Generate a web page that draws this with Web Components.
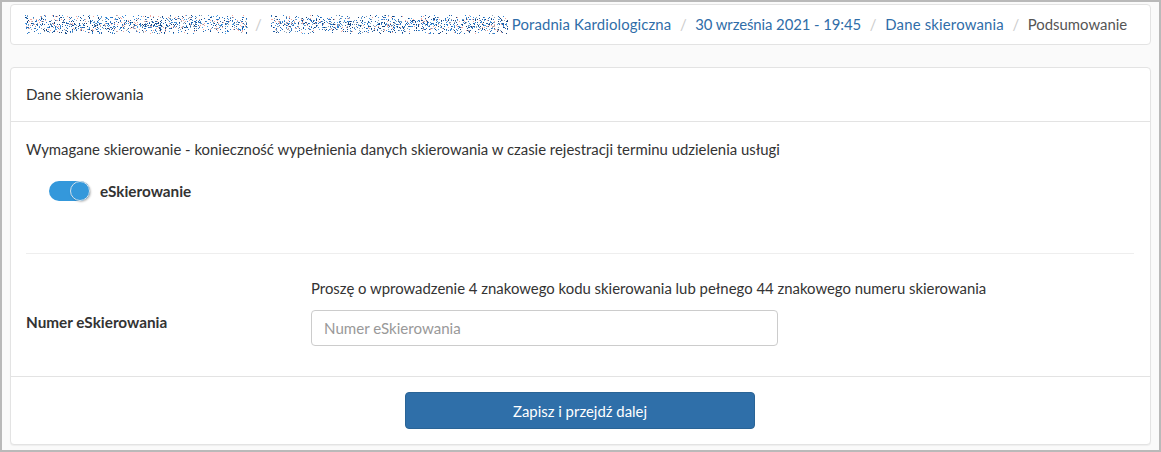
<!DOCTYPE html>
<html lang="pl">
<head>
<meta charset="utf-8">
<title>Dane skierowania</title>
<style>
  html, body { margin: 0; height: 100%; }
  body { font: 14.9px/20px Lato, "Liberation Sans", sans-serif; color: #333; background: #fafafa; }
</style>
</head>
<body>
<app-frame>
  <bread-crumbs>
    <crumb-item noise="223"></crumb-item>
    <crumb-item noise="237"></crumb-item>
    <crumb-item nosep style="letter-spacing: .13px">Poradnia Kardiologiczna</crumb-item>
    <crumb-item style="letter-spacing: -.08px">30 września 2021 - 19:45</crumb-item>
    <crumb-item style="letter-spacing: .18px">Dane skierowania</crumb-item>
    <crumb-item current>Podsumowanie</crumb-item>
  </bread-crumbs>
  <form-card>
    <span slot="title" style="font-size: 15.15px">Dane skierowania</span>
    <p-note>Wymagane skierowanie - konieczność wypełnienia danych skierowania w czasie rejestracji terminu udzielenia usługi</p-note>
    <toggle-switch checked>eSkierowanie</toggle-switch>
    <form-row label="Numer eSkierowania">
      <p-note>Proszę o wprowadzenie 4 znakowego kodu skierowania lub pełnego 44 znakowego numeru skierowania</p-note>
      <text-field placeholder="Numer eSkierowania"></text-field>
    </form-row>
    <primary-button slot="footer">Zapisz i przejdź dalej</primary-button>
  </form-card>
</app-frame>

<script>
/**
 * Small helper: attaches an open shadow root with the given markup.
 */
const shadowOf = (el, html) => {
  el.attachShadow({ mode: "open" });
  el.shadowRoot.innerHTML = html;
  return el.shadowRoot;
};

class AppFrame extends HTMLElement {
  connectedCallback() {
    shadowOf(this, `
      <style>
        :host {
          display: flex; flex-direction: column; box-sizing: border-box;
          height: 452px; padding: 2px 8px 5px 8px;
          border: 2px solid #b9b9b9;
          background: #fafafa;
        }
      </style>
      <slot></slot>
    `);
  }
}

class BreadCrumbs extends HTMLElement {
  connectedCallback() {
    shadowOf(this, `
      <style>
        :host {
          display: flex; align-items: center; box-sizing: border-box;
          height: 41px; padding: 0 14px; margin-bottom: 22px;
          background: #fff; border: 1px solid #e3e3e3; border-radius: 4px;
          white-space: nowrap;
        }
      </style>
      <slot></slot>
    `);
  }
}

// Redacted crumbs are a field of random pixels, seeded so each run is the same
const noiseSvg = (width, seed) => {
  let s = seed;
  const next = () => (s = (s * 16807) % 2147483647) / 2147483647;
  const colors = ["#2a66ad", "#1f5fa8", "#2f7fd0", "#4a9be0", "#f2a9a0", "#8fa3b5", "#163f78"];
  let rects = "";
  for (let x = 0; x < width; x++) {
    for (let y = 0; y < 19; y++) {
      const band = 1 - Math.abs(y - 9) / 12;
      if (next() < 0.36 * band) {
        const c = colors[Math.floor(next() * colors.length)];
        rects += `<rect x="${x}" y="${y}" width="1" height="1" fill="${c}"/>`;
      }
    }
  }
  return `<svg width="${width}" height="19" viewBox="0 0 ${width} 19" shape-rendering="crispEdges" aria-hidden="true">${rects}</svg>`;
};

let noiseSeed = 4711;

class CrumbItem extends HTMLElement {
  connectedCallback() {
    const noise = this.getAttribute("noise");
    const first = !this.previousElementSibling;
    const body = noise ? noiseSvg(Number(noise), (noiseSeed += 1237)) : "<slot></slot>";
    let sep = `<span class="sep${noise ? " tight" : ""}">/</span>`;
    if (first) sep = "";
    if (this.hasAttribute("nosep")) sep = '<span class="gap"></span>';
    shadowOf(this, `
      <style>
        :host { display: inline-flex; align-items: center; color: #2f6da8; }
        :host([current]) { color: #555; }
        .sep { color: #ccc; padding: 0 8.6px; }
        .sep.tight { padding: 0 9px 0 7px; }
        .gap { width: 4px; }
        svg { display: block; }
      </style>
      ${sep}${body}
    `);
  }
}

class FormCard extends HTMLElement {
  connectedCallback() {
    shadowOf(this, `
      <style>
        :host {
          display: flex; flex-direction: column; box-sizing: border-box;
          height: 379px; background: #fff;
          border: 1px solid #e3e3e3; border-radius: 4px;
          box-shadow: 0 1px 1px rgba(0, 0, 0, .05);
        }
        header { height: 53px; padding: 0 15px; display: flex; align-items: center; border-bottom: 1px solid #e3e3e3; }
        main { flex: 1; padding: 17px 16px 0 15px; }
        footer { display: flex; justify-content: center; padding: 15px 1px 15px 0; border-top: 1px solid #e3e3e3; }
      </style>
      <header><slot name="title"></slot></header>
      <main><slot></slot></main>
      <footer><slot name="footer"></slot></footer>
    `);
  }
}

class PNote extends HTMLElement {
  connectedCallback() {
    shadowOf(this, `<style>:host { display: block; white-space: nowrap; }</style><slot></slot>`);
  }
}

class ToggleSwitch extends HTMLElement {
  connectedCallback() {
    shadowOf(this, `
      <style>
        :host {
          display: flex; align-items: center; gap: 10px;
          height: 20px; margin: 22px 0 0 23px; padding-bottom: 52px;
          font-weight: 700; font-size: 15.3px;
        }
        .track { position: relative; width: 41px; height: 20px; border-radius: 10px; background: #3498db; }
        .knob {
          position: absolute; right: 0; top: 0; width: 20px; height: 20px;
          box-sizing: border-box; border-radius: 50%; background: #3498db;
          border: 1px solid #d5e3ee; box-shadow: 1px 1px 2px rgba(0, 0, 0, .25);
        }
      </style>
      <span class="track"><span class="knob"></span></span>
      <span><slot></slot></span>
    `);
  }
}

class FormRow extends HTMLElement {
  connectedCallback() {
    shadowOf(this, `
      <style>
        :host {
          display: grid; grid-template-columns: 285px 1fr; align-items: center;
          border-top: 1px solid #eee; padding-top: 24px;
        }
        label { font-weight: 700; font-size: 15.3px; padding-top: 20px; }
        .control { display: flex; flex-direction: column; gap: 12px; }
      </style>
      <label>${this.getAttribute("label")}</label>
      <div class="control"><slot></slot></div>
    `);
  }
}

class TextField extends HTMLElement {
  connectedCallback() {
    shadowOf(this, `
      <style>
        :host { display: block; width: 467px; }
        input {
          display: block; width: 100%; height: 36px; box-sizing: border-box;
          padding: 6px 12px; font: inherit; font-size: 15.1px; color: #555; background: #fff;
          border: 1px solid #ccc; border-radius: 4px; outline: none;
        }
        input::placeholder { color: #999; opacity: 1; }
      </style>
      <input type="text" placeholder="${this.getAttribute("placeholder")}">
    `);
  }
}

class PrimaryButton extends HTMLElement {
  connectedCallback() {
    shadowOf(this, `
      <style>
        :host { display: block; }
        button {
          display: block; width: 350px; height: 37px; font: inherit; color: #fff;
          background: #2f6fa9; border: 1px solid #2a6496; border-radius: 4px; cursor: pointer;
        }
      </style>
      <button type="button"><slot></slot></button>
    `);
  }
}

customElements.define("app-frame", AppFrame);
customElements.define("bread-crumbs", BreadCrumbs);
customElements.define("crumb-item", CrumbItem);
customElements.define("form-card", FormCard);
customElements.define("p-note", PNote);
customElements.define("toggle-switch", ToggleSwitch);
customElements.define("form-row", FormRow);
customElements.define("text-field", TextField);
customElements.define("primary-button", PrimaryButton);
</script>
</body>
</html>
